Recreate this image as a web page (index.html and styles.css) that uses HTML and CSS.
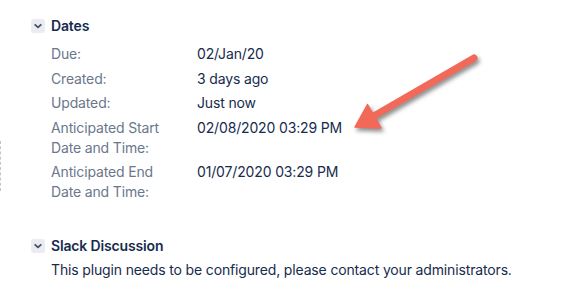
FILE: index.html
```html
<!DOCTYPE html>
<html>
<head>
<meta charset="utf-8">
<link rel="stylesheet" href="styles.css">
</head>
<body>
<div class="page">
  <div class="dash-edge"></div>
  <section class="module">
    <div class="mod-head">
      <span class="toggle"><svg width="14" height="14" viewBox="0 0 14 14"><path d="M4.2 5.8 L7 8.4 L9.8 5.8" fill="none" stroke="#42526e" stroke-width="1.8" stroke-linecap="round" stroke-linejoin="round"/></svg></span>
      <h2 class="mod-title">Dates</h2>
    </div>
    <dl class="dates">
      <div class="row"><dt>Due:</dt><dd>02/Jan/20</dd></div>
      <div class="row"><dt>Created:</dt><dd>3 days ago</dd></div>
      <div class="row"><dt>Updated:</dt><dd>Just now</dd></div>
      <div class="row"><dt>Anticipated Start Date and Time:</dt><dd>02/08/2020 03:29 PM</dd></div>
      <div class="row"><dt>Anticipated End Date and Time:</dt><dd>01/07/2020 03:29 PM</dd></div>
    </dl>
  </section>
  <section class="module slack">
    <div class="mod-head">
      <span class="toggle"><svg width="14" height="14" viewBox="0 0 14 14"><path d="M4.2 5.8 L7 8.4 L9.8 5.8" fill="none" stroke="#42526e" stroke-width="1.8" stroke-linecap="round" stroke-linejoin="round"/></svg></span>
      <h2 class="mod-title">Slack Discussion</h2>
    </div>
    <p class="desc">This plugin needs to be configured, please contact your administrators.</p>
  </section>
  <svg class="arrow" width="150" height="100" viewBox="340 40 150 100">
    <line x1="474" y1="58" x2="372" y2="117" stroke="#f2695a" stroke-width="7" stroke-linecap="round"/>
    <polygon points="355,127 367.5,104.5 381,128" fill="#f2695a" stroke="#f2695a" stroke-width="1.5" stroke-linejoin="round"/>
  </svg>
</div>
</body>
</html>
```
FILE: styles.css
```css
html, body {
  margin: 0;
  padding: 0;
  background: #ffffff;
}
body {
  font-family: Inter, "Noto Sans", "Liberation Sans", sans-serif;
  font-size: 14px;
  line-height: 20px;
  letter-spacing: -0.15px;
  color: #172b4d;
}
.page {
  position: relative;
  width: 575px;
  height: 300px;
  overflow: hidden;
  padding: 16px 0 0 31px;
  box-sizing: border-box;
}
.dash-edge {
  position: absolute;
  left: 0;
  top: 141px;
  width: 0;
  height: 50px;
  border-left: 1px dashed #c1c7d0;
}
.mod-head {
  display: flex;
  align-items: center;
  gap: 6px;
  height: 20px;
}
.toggle {
  display: flex;
  width: 14px;
  height: 14px;
  background: #ebecf0;
  border-radius: 3px;
}
.mod-title {
  margin: 0;
  font-size: 14px;
  font-weight: 600;
  line-height: 20px;
  color: #172b4d;
}
.dates {
  margin: 8px 0 0 20px;
  display: flex;
  flex-direction: column;
  gap: 4.5px;
}
.row {
  display: flex;
}
.row dt {
  width: 126px;
  padding-right: 20px;
  color: #6b778c;
}
.row dd {
  margin: 0;
  color: #172b4d;
}
.slack {
  margin-top: 34px;
}
.desc {
  margin: 4px 0 0 20px;
  color: #172b4d;
}
.arrow {
  position: absolute;
  left: 340px;
  top: 40px;
  overflow: visible;
  filter: drop-shadow(2px 3px 2px rgba(0, 0, 0, 0.45));
}
```
